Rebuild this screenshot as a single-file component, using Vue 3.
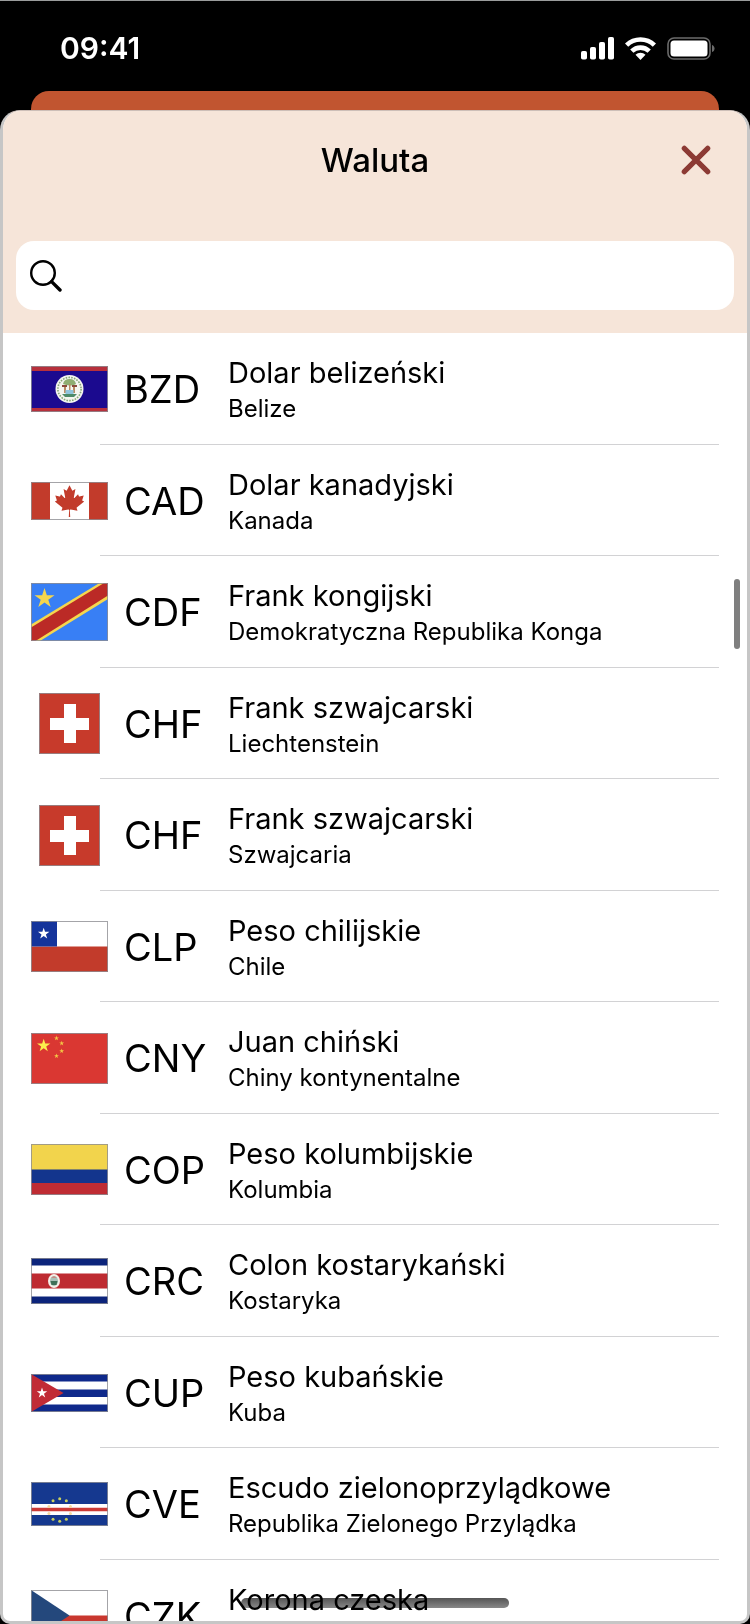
<template>
  <div class="phone">
    <div class="status-bar">
      <span class="time">09:41</span>
      <div class="status-icons">
        <svg width="33" height="23" viewBox="0 0 33 23" fill="#fff">
          <rect x="0" y="14" width="6" height="8.5" rx="1.8" />
          <rect x="9" y="10" width="6" height="12.5" rx="1.8" />
          <rect x="18" y="5" width="6" height="17.5" rx="1.8" />
          <rect x="27" y="0" width="6" height="22.5" rx="1.8" />
        </svg>
        <svg width="31" height="23" viewBox="0 0 31 23">
          <g fill="none" stroke="#fff" stroke-width="4.6">
            <path d="M1.6 8.2a19.8 19.8 0 0 1 27.8 0" />
            <path d="M6.8 14.2a12.4 12.4 0 0 1 17.4 0" />
          </g>
          <path d="M15.5 23l-5-5.2a7.2 7.2 0 0 1 10 0z" fill="#fff" />
        </svg>
        <svg width="48" height="23" viewBox="0 0 48 23">
          <rect x="1" y="1" width="42" height="21" rx="6" fill="none" stroke="#6b6b6b" stroke-width="1.6" />
          <rect x="3.5" y="3.5" width="37" height="16" rx="3.5" fill="#fff" />
          <path d="M45 8c3.4 1 3.4 6 0 7z" fill="#6b6b6b" />
        </svg>
      </div>
    </div>

    <div class="back-card"></div>

    <main class="sheet">
      <header class="sheet-header">
        <div class="title-row">
          <h1>Waluta</h1>
          <button class="close" type="button" aria-label="Zamknij" @click="query = ''">
            <svg width="30" height="30" viewBox="0 0 30 30" fill="none" stroke="#8c3a34" stroke-width="5.2" stroke-linecap="round">
              <path d="M3.3 3.3l23.4 23.4M26.7 3.3L3.3 26.7" />
            </svg>
          </button>
        </div>
        <label class="search">
          <svg width="32" height="32" viewBox="0 0 32 32" fill="none" stroke="#000" stroke-linecap="round">
            <circle cx="13" cy="13" r="11.8" stroke-width="2.4" />
            <path d="M21.6 21.6l8.4 8.4" stroke-width="3.4" />
          </svg>
          <input v-model="query" type="text" aria-label="Szukaj" />
        </label>
      </header>

      <ul class="list">
        <li v-for="item in filtered" :key="item.country">
          <button class="row" type="button">
            <svg class="flag" :width="item.w" :height="item.h" :viewBox="`0 0 ${item.w} ${item.h}`">
              <g v-if="item.code === 'BZD'">
                <rect width="77" height="46" fill="#b7303c" />
                <rect y="5" width="77" height="37" fill="#1b0a8f" />
                <circle cx="38.5" cy="23" r="14" fill="#f4f5f0" />
                <circle cx="38.5" cy="23" r="11.6" fill="none" stroke="#86a877" stroke-width="1.6" stroke-dasharray="1.6 1.2" />
                <path d="M32 18q1-5 6.500-5t6.500 5q-3 2-6.500 1.500t-6.500-1.500z" fill="#8fae72" />
                <path d="M31 19h5v2h-5zM41 19h5v2h-5z" fill="#8a4a3c" />
                <path d="M38 18h1.500v6h-1.500zM33 21h2v6h-2zM42 21h2v6h-2z" fill="#b98c63" />
                <path d="M34.500 24h8v4h-8z" fill="#8fc4dc" />
                <path d="M31 28h15l-3 3h-9z" fill="#4d8a68" />
              </g>
              <g v-else-if="item.code === 'CAD'">
                <rect width="77" height="38" fill="#fff" />
                <path d="M0 0h19v38H0zM58 0h19v38H58z" fill="#c23b2b" />
                <path
                  transform="translate(38.5 19) scale(.0079)"
                  fill="#c23b2b"
                  d="m-90 2030 45-863a95 95 0 0 0-111-98l-859 151 116-320a65 65 0 0 0-20-73l-941-762 212-99a65 65 0 0 0 34-79l-186-572 542 115a65 65 0 0 0 73-38l105-247 423 454a65 65 0 0 0 111-57l-204-1052 327 189a65 65 0 0 0 91-27l332-652 332 652a65 65 0 0 0 91 27l327-189-204 1052a65 65 0 0 0 111 57l423-454 105 247a65 65 0 0 0 73 38l542-115-186 572a65 65 0 0 0 34 79l212 99-941 762a65 65 0 0 0-20 73l116 320-859-151a95 95 0 0 0-111 98l45 863z"
                />
              </g>
              <g v-else-if="item.code === 'CDF'">
                <rect width="77" height="58" fill="#387ff5" />
                <path d="M0 41.500L68.500 0H77v16L9 58H0z" fill="#f5d64e" />
                <path d="M0 44.500L73 0h4v12.500L4.500 58H0z" fill="#bb2a26" />
                <polygon :points="star(13.5, 15.5, 10.5)" fill="#f5d64e" />
              </g>
              <g v-else-if="item.code === 'CHF'">
                <rect width="61" height="61" fill="#c73a2b" />
                <path d="M25 11h12v14h13v12H37v13H25V37H11V25h14z" fill="#fff" />
              </g>
              <g v-else-if="item.code === 'CLP'">
                <rect width="77" height="51" fill="#fff" />
                <path d="M0 25.500h77V51H0z" fill="#c23b2b" />
                <path d="M0 0h26v25.500H0z" fill="#15349b" />
                <polygon :points="star(12.7, 12.7, 6)" fill="#fff" />
              </g>
              <g v-else-if="item.code === 'CNY'">
                <rect width="77" height="51" fill="#da3732" />
                <polygon :points="star(12.7, 12.7, 7)" fill="#fcee4c" />
                <polygon v-for="s in smallStars" :key="s.join()" :points="star(s[0], s[1], 2.6)" fill="#f3c945" />
              </g>
              <g v-else-if="item.code === 'COP'">
                <rect width="77" height="51" fill="#f2d44c" />
                <path d="M0 25.500h77V39H0z" fill="#13358d" />
                <path d="M0 39h77v12H0z" fill="#bf2c33" />
              </g>
              <g v-else-if="item.code === 'CRC'">
                <rect width="77" height="46" fill="#0c247b" />
                <path d="M0 7.500h77v31H0z" fill="#fff" />
                <path d="M0 15.500h77v15H0z" fill="#be2b31" />
                <ellipse cx="23" cy="23" rx="6" ry="7" fill="#f3efe8" />
                <ellipse cx="23" cy="23" rx="4" ry="5" fill="#a9c0b8" />
                <path d="M19.500 23h7l-1 4h-5z" fill="#3f6f58" />
                <path d="M20 20l3-2 3 2z" fill="#c98b83" />
              </g>
              <g v-else-if="item.code === 'CUP'">
                <rect width="77" height="38" fill="#fff" />
                <path d="M0 0h77v7.500H0zM0 15.500h77V23H0zM0 30.500h77V38H0z" fill="#0f298b" />
                <path d="M0 0l32.500 19L0 38z" fill="#c12b36" />
                <polygon :points="star(11, 19, 5.5)" fill="#fff" />
              </g>
              <g v-else-if="item.code === 'CVE'">
                <rect width="77" height="44" fill="#15388f" />
                <path d="M0 22h77v11H0z" fill="#fff" />
                <path d="M0 25.700h77v3.600H0z" fill="#cb3a37" />
                <circle v-for="n in 10" :key="n" :cx="ring(n).x" :cy="ring(n).y" r="1.5" :fill="ring(n).color" />
              </g>
              <g v-else>
                <rect width="77" height="51" fill="#fff" />
                <path d="M0 25.500h77V51H0z" fill="#c9372f" />
                <path d="M0 0l38.500 25.500L0 51z" fill="#24487c" />
              </g>
              <rect x="0.5" y="0.5" :width="item.w - 1" :height="item.h - 1" fill="none" stroke="#8d8d92" stroke-opacity=".8" />
            </svg>
            <span class="code">{{ item.code }}</span>
            <span class="names">
              <span class="name">{{ item.name }}</span>
              <span class="country">{{ item.country }}</span>
            </span>
          </button>
        </li>
      </ul>

      <div class="scroll-thumb"></div>
      <div class="home-indicator"></div>
    </main>
  </div>
</template>

<script setup>
import { computed, ref } from "vue";

const query = ref("");

const currencies = [
  { code: "BZD", name: "Dolar belizeński", country: "Belize", w: 77, h: 46 },
  { code: "CAD", name: "Dolar kanadyjski", country: "Kanada", w: 77, h: 38 },
  { code: "CDF", name: "Frank kongijski", country: "Demokratyczna Republika Konga", w: 77, h: 58 },
  { code: "CHF", name: "Frank szwajcarski", country: "Liechtenstein", w: 61, h: 61 },
  { code: "CHF", name: "Frank szwajcarski", country: "Szwajcaria", w: 61, h: 61 },
  { code: "CLP", name: "Peso chilijskie", country: "Chile", w: 77, h: 51 },
  { code: "CNY", name: "Juan chiński", country: "Chiny kontynentalne", w: 77, h: 51 },
  { code: "COP", name: "Peso kolumbijskie", country: "Kolumbia", w: 77, h: 51 },
  { code: "CRC", name: "Colon kostarykański", country: "Kostaryka", w: 77, h: 46 },
  { code: "CUP", name: "Peso kubańskie", country: "Kuba", w: 77, h: 38 },
  { code: "CVE", name: "Escudo zielonoprzylądkowe", country: "Republika Zielonego Przylądka", w: 77, h: 44 },
  { code: "CZK", name: "Korona czeska", country: "Czechy", w: 77, h: 51 },
];

const filtered = computed(() => {
  const q = query.value.trim().toLowerCase();
  return currencies.filter((c) => `${c.code} ${c.name} ${c.country}`.toLowerCase().includes(q));
});

const smallStars = [
  [25.5, 5.2],
  [30.7, 10.3],
  [30.7, 18],
  [25.5, 23],
];

// five-pointed star as polygon points
function star(cx, cy, r) {
  const pts = [];
  for (let i = 0; i < 10; i++) {
    const a = (Math.PI / 5) * i - Math.PI / 2;
    const d = i % 2 ? r * 0.38 : r;
    pts.push(`${(cx + d * Math.cos(a)).toFixed(2)},${(cy + d * Math.sin(a)).toFixed(2)}`);
  }
  return pts.join(" ");
}

// ring of ten stars on the Cape Verde flag, paler where it crosses the white stripes
function ring(n) {
  const a = (Math.PI / 5) * n - Math.PI / 2;
  const y = 28 + 11.3 * Math.sin(a);
  return {
    x: 28.7 + 11.3 * Math.cos(a),
    y,
    color: y > 22 && y < 33 ? "#f6d9a0" : "#c9d05e",
  };
}
</script>

<style scoped>
.phone {
  display: flex;
  flex-direction: column;
  box-sizing: border-box;
  height: 100vh;
  border-top: 1px solid #9a9c9c;
  background: #000;
  color: #000;
  font-family: Inter, "Liberation Sans", sans-serif;
}
.status-bar {
  display: flex;
  justify-content: space-between;
  align-items: center;
  box-sizing: border-box;
  height: 90px;
  padding: 4px 35px 0 60px;
  color: #fff;
}
.time {
  font-size: 30px;
  font-weight: 600;
  line-height: 36px;
}
.status-icons {
  display: flex;
  align-items: center;
  gap: 11px;
}
.back-card {
  flex: none;
  height: 19px;
  margin: 0 31px;
  border-radius: 18px 18px 0 0;
  background: #c15530;
}
.sheet {
  position: relative;
  flex: 1;
  min-height: 0;
  overflow: hidden;
  border: 3px solid #c6c6c6;
  border-top: 1px solid #cdbfb8;
  border-radius: 20px 20px 10px 10px;
  background: #fff;
}
.sheet-header {
  padding: 0 13px 23px;
  background: #f6e5d9;
}
.title-row {
  display: grid;
  grid-template-columns: 1fr auto 1fr;
  align-items: center;
  height: 98px;
  margin-bottom: 32px;
}
h1 {
  grid-column: 2;
  margin: 0;
  font-size: 33px;
  font-weight: 500;
  line-height: 40px;
}
button {
  border: 0;
  padding: 0;
  background: none;
  color: inherit;
  font-family: inherit;
  text-align: left;
  cursor: pointer;
}
.close {
  display: flex;
  justify-self: end;
  margin-right: 23px;
}
.search {
  display: flex;
  align-items: center;
  gap: 12px;
  height: 69px;
  padding: 0 14px;
  border-radius: 18px;
  background: #fff;
}
.search input {
  flex: 1;
  min-width: 0;
  border: 0;
  outline: 0;
  background: none;
  font-family: inherit;
  font-size: 30px;
}
.list {
  margin: 0;
  padding: 0;
  list-style: none;
}
li {
  height: 112px;
  background: linear-gradient(#d2d2d4, #d2d2d4) 97px 100% / calc(100% - 125px) 1px no-repeat;
}
li:nth-child(even) {
  height: 111px;
}
.row {
  display: grid;
  grid-template-columns: 77px 88px 1fr;
  gap: 16px;
  align-items: center;
  width: 100%;
  height: 100%;
  padding: 0 28px;
}
.flag {
  display: block;
  justify-self: center;
}
.code {
  font-size: 38px;
  line-height: 46px;
}
.names {
  display: flex;
  flex-direction: column;
  padding-top: 2px;
  white-space: nowrap;
}
.name {
  font-size: 29px;
  line-height: 38px;
}
.country {
  font-size: 24px;
  line-height: 34px;
}
.scroll-thumb {
  position: absolute;
  top: 468px;
  right: 7px;
  width: 6px;
  height: 70px;
  border-radius: 3px;
  background: #7f7f7f;
}
.home-indicator {
  position: absolute;
  bottom: 13px;
  left: 50%;
  width: 36%;
  height: 10px;
  border-radius: 5px;
  background: linear-gradient(#555, #888);
  mix-blend-mode: multiply;
  transform: translateX(-50%);
}
</style>

<style>
body {
  margin: 0;
  background: #000;
}
</style>
